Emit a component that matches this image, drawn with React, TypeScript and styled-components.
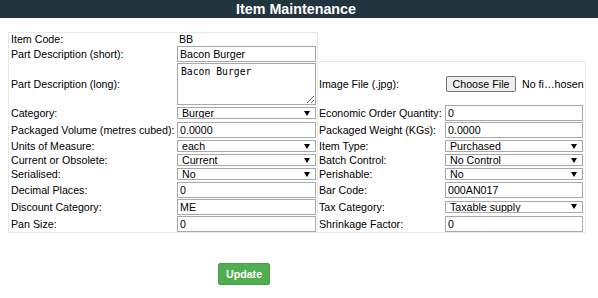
import React from "react";
import styled, { createGlobalStyle } from "styled-components";

const GlobalStyle = createGlobalStyle`
  *, *::before, *::after { box-sizing: border-box; }
  html, body { margin: 0; padding: 0; background: #ffffff; }
  body {
    font-family: "Liberation Sans", Arial, sans-serif;
    font-size: 8pt;
    color: #000000;
  }
`;

const Page = styled.div`
  width: 598px;
`;

const Header = styled.header`
  height: 18px;
  background: #22343e;
  display: flex;
  align-items: center;
  justify-content: center;
  padding-right: 6px;
`;

const Title = styled.h1`
  margin: 0;
  color: #ffffff;
  font-family: "Liberation Sans", Arial, sans-serif;
  font-weight: bold;
  font-size: 14.3px;
  line-height: 18px;
`;

const Form = styled.form`
  margin: 0;
  padding: 14px 0 0 8px;
`;

const Tables = styled.div`
  display: flex;
  align-items: flex-end;
`;

const FieldTable = styled.div<{ $width: number; $overlap?: boolean }>`
  width: ${(p) => p.$width}px;
  margin-left: ${(p) => (p.$overlap ? "-1px" : "0")};
  border: 1px solid #e9e9e9;
  display: flex;
  flex-direction: column;
  padding-right: ${(p) => (p.$overlap ? "2px" : "1px")};
`;

const Row = styled.div<{ $h: number }>`
  height: ${(p) => p.$h}px;
  display: flex;
  align-items: center;
`;

const Label = styled.div<{ $width: number; $pad: number }>`
  width: ${(p) => p.$width}px;
  flex: none;
  padding-left: ${(p) => p.$pad}px;
  white-space: nowrap;
  line-height: 12px;
`;

const Cell = styled.div`
  flex: 1;
  min-width: 0;
  display: flex;
  align-items: center;
`;

const StaticValue = styled.span`
  padding-left: 2px;
  line-height: 12px;
`;

const TextInput = styled.input`
  width: 100%;
  height: 16px;
  margin: 0;
  padding: 0 2px;
  border: 1px solid #a9a9a9;
  border-radius: 0;
  font-family: "Liberation Sans", Arial, sans-serif;
  font-size: 8pt;
  color: #000000;
  background: #ffffff;
  outline: none;
`;

const TextArea = styled.textarea`
  width: 100%;
  height: 42px;
  margin: 0;
  padding: 2px 3px;
  border: 1px solid #a9a9a9;
  font-family: "DejaVu Sans Mono", "Liberation Mono", monospace;
  font-size: 9.75px;
  line-height: 12px;
  color: #000000;
  outline: none;
`;

const SelectBox = styled.div`
  position: relative;
  width: 100%;
  height: 12px;
`;

const Select = styled.select`
  appearance: none;
  -webkit-appearance: none;
  width: 100%;
  height: 12px;
  margin: 0;
  padding: 0 14px 0 4px;
  border: 1px solid #a9a9a9;
  border-radius: 0;
  background: #ffffff;
  font-family: "Liberation Sans", Arial, sans-serif;
  font-size: 8pt;
  line-height: 10px;
  color: #000000;
  outline: none;
`;

const Arrow = styled.svg`
  position: absolute;
  right: 6px;
  top: 3.5px;
  width: 6px;
  height: 5px;
  pointer-events: none;
`;

const FileField = styled.div`
  display: flex;
  align-items: center;
  padding-left: 1px;
  white-space: nowrap;
`;

const FileButton = styled.button`
  height: 16px;
  width: 70px;
  padding: 0;
  border: 1px solid #767676;
  border-radius: 2px;
  background: #efefef;
  font-family: "Liberation Sans", Arial, sans-serif;
  font-size: 8pt;
  color: #000000;
`;

const FileName = styled.span`
  margin-left: 6px;
`;

const Actions = styled.div`
  padding: 30px 0 0 210px;
`;

const UpdateButton = styled.button`
  width: 52px;
  height: 22px;
  padding: 0;
  border: 1px solid #469f46;
  border-radius: 2px;
  background: #50ad50;
  color: #ffffff;
  font-family: "Liberation Sans", Arial, sans-serif;
  font-weight: bold;
  font-size: 8pt;
`;

type Field =
  | { kind: "text"; value: string }
  | { kind: "input"; value: string }
  | { kind: "area"; value: string }
  | { kind: "select"; value: string }
  | { kind: "file" };

type RowDef = { label: string; h: number; field: Field };

const leftRows: RowDef[] = [
  { label: "Item Code:", h: 12, field: { kind: "text", value: "BB" } },
  { label: "Part Description (short):", h: 17, field: { kind: "input", value: "Bacon Burger" } },
  { label: "Part Description (long):", h: 43, field: { kind: "area", value: "Bacon Burger" } },
  { label: "Category:", h: 16, field: { kind: "select", value: "Burger" } },
  { label: "Packaged Volume (metres cubed):", h: 18, field: { kind: "input", value: "0.0000" } },
  { label: "Units of Measure:", h: 14, field: { kind: "select", value: "each" } },
  { label: "Current or Obsolete:", h: 14, field: { kind: "select", value: "Current" } },
  { label: "Serialised:", h: 14, field: { kind: "select", value: "No" } },
  { label: "Decimal Places:", h: 17, field: { kind: "input", value: "0" } },
  { label: "Discount Category:", h: 17, field: { kind: "input", value: "ME" } },
  { label: "Pan Size:", h: 17, field: { kind: "input", value: "0" } },
];

const rightRows: RowDef[] = [
  { label: "Image File (.jpg):", h: 43, field: { kind: "file" } },
  { label: "Economic Order Quantity:", h: 16, field: { kind: "input", value: "0" } },
  { label: "Packaged Weight (KGs):", h: 18, field: { kind: "input", value: "0.0000" } },
  { label: "Item Type:", h: 14, field: { kind: "select", value: "Purchased" } },
  { label: "Batch Control:", h: 14, field: { kind: "select", value: "No Control" } },
  { label: "Perishable:", h: 14, field: { kind: "select", value: "No" } },
  { label: "Bar Code:", h: 17, field: { kind: "input", value: "000AN017" } },
  { label: "Tax Category:", h: 17, field: { kind: "select", value: "Taxable supply" } },
  { label: "Shrinkage Factor:", h: 17, field: { kind: "input", value: "0" } },
];

function FieldControl({ field }: { field: Field }) {
  switch (field.kind) {
    case "text":
      return <StaticValue>{field.value}</StaticValue>;
    case "input":
      return <TextInput defaultValue={field.value} />;
    case "area":
      return <TextArea defaultValue={field.value} />;
    case "select":
      return (
        <SelectBox>
          <Select defaultValue={field.value}>
            <option value={field.value}>{field.value}</option>
          </Select>
          <Arrow viewBox="0 0 6 5">
            <polygon points="0,0 6,0 3,5" fill="#000" />
          </Arrow>
        </SelectBox>
      );
    case "file":
      return (
        <FileField>
          <FileButton type="button">Choose File</FileButton>
          <FileName>No fi…hosen</FileName>
        </FileField>
      );
  }
}

function Table({
  rows,
  width,
  labelWidth,
  labelPad,
  overlap,
}: {
  rows: RowDef[];
  width: number;
  labelWidth: number;
  labelPad: number;
  overlap?: boolean;
}) {
  return (
    <FieldTable $width={width} $overlap={overlap}>
      {rows.map((r) => (
        <Row key={r.label} $h={r.h}>
          <Label $width={labelWidth} $pad={labelPad}>
            {r.label}
          </Label>
          <Cell>
            <FieldControl field={r.field} />
          </Cell>
        </Row>
      ))}
    </FieldTable>
  );
}

export default function App() {
  return (
    <Page>
      <GlobalStyle />
      <Header>
        <Title>Item Maintenance</Title>
      </Header>
      <Form onSubmit={(e) => e.preventDefault()}>
        <Tables>
          <Table rows={leftRows} width={310} labelWidth={168} labelPad={2} />
          <Table rows={rightRows} width={269} labelWidth={127} labelPad={1} overlap />
        </Tables>
        <Actions>
          <UpdateButton type="submit">Update</UpdateButton>
        </Actions>
      </Form>
    </Page>
  );
}
